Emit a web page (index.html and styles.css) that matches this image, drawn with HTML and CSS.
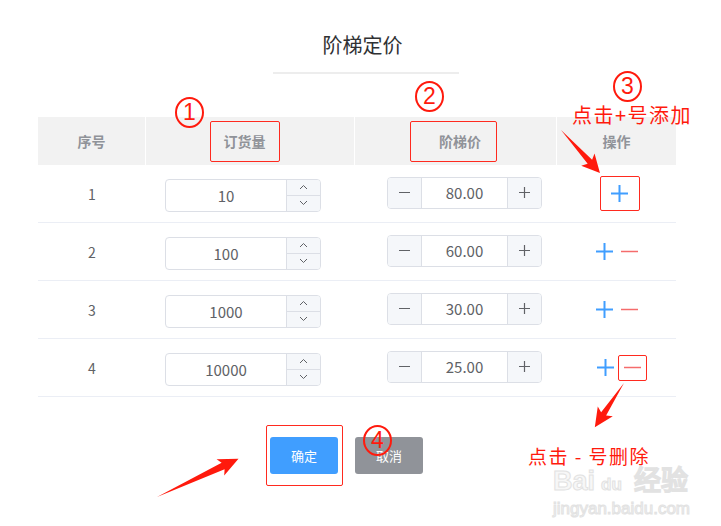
FILE: index.html
```html
<!DOCTYPE html>
<html lang="zh-CN">
<head>
    <meta charset="UTF-8">
    <title>阶梯定价</title>
    <link rel="stylesheet" href="styles.css">
</head>
<body>
<div class="page">
    <h1 class="title">阶梯定价</h1>
    <div class="title-line"></div>

    <div class="panel">
        <div class="tier-table">
            <div class="th">序号</div>
            <div class="th"><span class="mark mark-qty">订货量</span></div>
            <div class="th"><span class="mark mark-price">阶梯价</span></div>
            <div class="th th-last">操作</div>

            <div class="td">1</div>
            <div class="td td-qty">
                <div class="num-input">
                    <span class="num-value">10</span>
                    <span class="spin">
                        <span class="spin-btn"><svg width="9" height="6" viewBox="0 0 9 6"><path d="M1 5 L4.5 1.5 L8 5" fill="none" stroke="#606266" stroke-width="1"/></svg></span>
                        <span class="spin-btn"><svg width="9" height="6" viewBox="0 0 9 6"><path d="M1 1 L4.5 4.5 L8 1" fill="none" stroke="#606266" stroke-width="1"/></svg></span>
                    </span>
                </div>
            </div>
            <div class="td td-price">
                <div class="stepper">
                    <span class="step-btn"><svg width="11" height="11" viewBox="0 0 11 11"><path d="M0 5.5 H11" stroke="#606266" stroke-width="1.2"/></svg></span>
                    <span class="step-value">80.00</span>
                    <span class="step-btn step-plus"><svg width="11" height="11" viewBox="0 0 11 11"><path d="M0 5.5 H11 M5.5 0 V11" stroke="#606266" stroke-width="1.2"/></svg></span>
                </div>
            </div>
            <div class="td td-op">
                <span class="op-box op-add-box"><svg class="ico-plus" width="17" height="17" viewBox="0 0 17 17"><path d="M0 8.5 H17 M8.5 0 V17" stroke="#409eff" stroke-width="2"/></svg></span>
            </div>

            <div class="td">2</div>
            <div class="td td-qty">
                <div class="num-input">
                    <span class="num-value">100</span>
                    <span class="spin">
                        <span class="spin-btn"><svg width="9" height="6" viewBox="0 0 9 6"><path d="M1 5 L4.5 1.5 L8 5" fill="none" stroke="#606266" stroke-width="1"/></svg></span>
                        <span class="spin-btn"><svg width="9" height="6" viewBox="0 0 9 6"><path d="M1 1 L4.5 4.5 L8 1" fill="none" stroke="#606266" stroke-width="1"/></svg></span>
                    </span>
                </div>
            </div>
            <div class="td td-price">
                <div class="stepper">
                    <span class="step-btn"><svg width="11" height="11" viewBox="0 0 11 11"><path d="M0 5.5 H11" stroke="#606266" stroke-width="1.2"/></svg></span>
                    <span class="step-value">60.00</span>
                    <span class="step-btn step-plus"><svg width="11" height="11" viewBox="0 0 11 11"><path d="M0 5.5 H11 M5.5 0 V11" stroke="#606266" stroke-width="1.2"/></svg></span>
                </div>
            </div>
            <div class="td td-op">
                <svg class="ico-plus" width="17" height="17" viewBox="0 0 17 17"><path d="M0 8.5 H17 M8.5 0 V17" stroke="#409eff" stroke-width="2"/></svg>
                <svg class="ico-minus" width="17" height="17" viewBox="0 0 17 17"><path d="M0 8.5 H17" stroke="#f56c6c" stroke-width="1.5"/></svg>
            </div>

            <div class="td">3</div>
            <div class="td td-qty">
                <div class="num-input">
                    <span class="num-value">1000</span>
                    <span class="spin">
                        <span class="spin-btn"><svg width="9" height="6" viewBox="0 0 9 6"><path d="M1 5 L4.5 1.5 L8 5" fill="none" stroke="#606266" stroke-width="1"/></svg></span>
                        <span class="spin-btn"><svg width="9" height="6" viewBox="0 0 9 6"><path d="M1 1 L4.5 4.5 L8 1" fill="none" stroke="#606266" stroke-width="1"/></svg></span>
                    </span>
                </div>
            </div>
            <div class="td td-price">
                <div class="stepper">
                    <span class="step-btn"><svg width="11" height="11" viewBox="0 0 11 11"><path d="M0 5.5 H11" stroke="#606266" stroke-width="1.2"/></svg></span>
                    <span class="step-value">30.00</span>
                    <span class="step-btn step-plus"><svg width="11" height="11" viewBox="0 0 11 11"><path d="M0 5.5 H11 M5.5 0 V11" stroke="#606266" stroke-width="1.2"/></svg></span>
                </div>
            </div>
            <div class="td td-op">
                <svg class="ico-plus" width="17" height="17" viewBox="0 0 17 17"><path d="M0 8.5 H17 M8.5 0 V17" stroke="#409eff" stroke-width="2"/></svg>
                <svg class="ico-minus" width="17" height="17" viewBox="0 0 17 17"><path d="M0 8.5 H17" stroke="#f56c6c" stroke-width="1.5"/></svg>
            </div>

            <div class="td">4</div>
            <div class="td td-qty">
                <div class="num-input">
                    <span class="num-value">10000</span>
                    <span class="spin">
                        <span class="spin-btn"><svg width="9" height="6" viewBox="0 0 9 6"><path d="M1 5 L4.5 1.5 L8 5" fill="none" stroke="#606266" stroke-width="1"/></svg></span>
                        <span class="spin-btn"><svg width="9" height="6" viewBox="0 0 9 6"><path d="M1 1 L4.5 4.5 L8 1" fill="none" stroke="#606266" stroke-width="1"/></svg></span>
                    </span>
                </div>
            </div>
            <div class="td td-price">
                <div class="stepper">
                    <span class="step-btn"><svg width="11" height="11" viewBox="0 0 11 11"><path d="M0 5.5 H11" stroke="#606266" stroke-width="1.2"/></svg></span>
                    <span class="step-value">25.00</span>
                    <span class="step-btn step-plus"><svg width="11" height="11" viewBox="0 0 11 11"><path d="M0 5.5 H11 M5.5 0 V11" stroke="#606266" stroke-width="1.2"/></svg></span>
                </div>
            </div>
            <div class="td td-op">
                <svg class="ico-plus" width="17" height="17" viewBox="0 0 17 17"><path d="M0 8.5 H17 M8.5 0 V17" stroke="#409eff" stroke-width="2"/></svg>
                <span class="op-box op-del-box"><svg class="ico-minus" width="17" height="17" viewBox="0 0 17 17"><path d="M0 8.5 H17" stroke="#f56c6c" stroke-width="1.5"/></svg></span>
            </div>
        </div>

        <div class="actions">
            <span class="mark mark-ok"><button class="btn btn-primary">确定</button></span>
            <button class="btn btn-cancel">取消</button>
        </div>
    </div>

    <!-- annotations drawn over the page -->
    <span class="circle-num num-1">1</span>
    <span class="circle-num num-2">2</span>
    <span class="circle-num num-3">3</span>
    <span class="circle-num num-4">4</span>
    <span class="note note-add">点击+号添加</span>
    <span class="note note-del">点击 - 号删除</span>

    <svg class="arrows" width="721" height="526" viewBox="0 0 721 526">
        <g transform="translate(561 130) rotate(47.8)">
            <polygon points="0,0 43,-3 40,-9 58,0 40,9 43,3" fill="#ff1a0d"/>
        </g>
        <g transform="translate(624 383) rotate(123.4)">
            <polygon points="0,0 37,-3 34,-9 53,0 34,9 37,3" fill="#ff1a0d"/>
        </g>
        <g transform="translate(157 497) rotate(-25.1)">
            <polygon points="0,0 73,-3.5 70,-9 90,0 70,9 73,3.5" fill="#ff1a0d"/>
        </g>
    </svg>

    <div class="watermark">
        <div class="wm-logo">Bai<span class="wm-paw">du</span>经验</div>
        <div class="wm-url">jingyan.baidu.com</div>
    </div>
</div>
</body>
</html>
```

FILE: styles.css
```css
body {
    margin: 0;
    background-color: #fff;
    font-family: "Noto Sans CJK SC", "Noto Sans", sans-serif;
}
.page {
    position: relative;
    width: 721px;
    height: 526px;
    padding-top: 31px;
    box-sizing: border-box;
    overflow: hidden;
}
.title {
    margin: 0;
    font-size: 20px;
    line-height: 28px;
    font-weight: normal;
    color: #303133;
    text-align: center;
    padding-left: 4px;
}
.title-line {
    width: 186px;
    height: 2px;
    margin: 13px 0 0 273px;
    background-color: #ededed;
}
.panel {
    width: 638px;
    margin: 43px 0 0 38px;
}
.tier-table {
    display: grid;
    grid-template-columns: 108px 209px 202px 119px;
}
.th {
    height: 48px;
    display: flex;
    align-items: center;
    justify-content: center;
    background-color: #f2f2f2;
    border-right: 1px solid #fff;
    color: #909399;
    font-size: 14px;
    font-weight: bold;
}
.th-last {
    border-right: none;
}
.mark {
    border: 1px solid #ff2a1f;
    border-radius: 2px;
}
.mark-qty {
    padding: 9px 13px 10px 13px;
    margin-left: -11px;
}
.mark-price {
    padding: 9px 15px 10px 28px;
    margin-left: -4px;
}
.td {
    height: 57px;
    display: flex;
    align-items: center;
    justify-content: center;
    border-bottom: 1px solid #ebeef5;
    color: #606266;
    font-size: 14px;
}
.td-qty {
    justify-content: flex-start;
    padding-left: 19px;
}
.td-price {
    justify-content: flex-start;
    padding-left: 32px;
}
.td-op {
    gap: 8px;
}
.num-input {
    display: flex;
    width: 156px;
    height: 33px;
    box-sizing: border-box;
    border: 1px solid #dcdfe6;
    border-radius: 4px;
    margin-top: 3px;
    overflow: hidden;
}
.num-value {
    flex: 1;
    display: flex;
    align-items: center;
    justify-content: center;
    font-size: 15px;
    color: #606266;
}
.spin {
    width: 33px;
    display: flex;
    flex-direction: column;
    border-left: 1px solid #dcdfe6;
    background-color: #f5f7fa;
}
.spin-btn {
    flex: 1;
    display: flex;
    align-items: center;
    justify-content: center;
}
.spin-btn + .spin-btn {
    border-top: 1px solid #dcdfe6;
}
.stepper {
    display: flex;
    width: 155px;
    height: 32px;
    box-sizing: border-box;
    border: 1px solid #dcdfe6;
    border-radius: 4px;
    overflow: hidden;
    margin-top: -2px;
}
.step-btn {
    width: 33px;
    display: flex;
    align-items: center;
    justify-content: center;
    background-color: #f5f7fa;
    border-right: 1px solid #dcdfe6;
}
.step-plus {
    border-right: none;
    border-left: 1px solid #dcdfe6;
}
.step-value {
    flex: 1;
    display: flex;
    align-items: center;
    justify-content: center;
    font-size: 15px;
    color: #606266;
}
.op-box {
    display: flex;
    align-items: center;
    justify-content: center;
    border: 1px solid #ff2a1f;
    border-radius: 2px;
}
.op-add-box {
    width: 38px;
    height: 33px;
    margin-left: 6px;
}
.op-del-box {
    width: 27px;
    height: 24px;
    margin-left: -4px;
    margin-right: -10px;
}
.actions {
    display: flex;
    align-items: center;
    gap: 12px;
    margin-top: 28px;
    padding-left: 228px;
}
.mark-ok {
    display: flex;
    padding: 11px 4px 11px 3px;
}
.btn {
    width: 68px;
    height: 37px;
    border: none;
    border-radius: 3px;
    color: #fff;
    font-size: 13px;
    font-family: "Noto Sans CJK SC", sans-serif;
}
.btn-primary {
    background-color: #409eff;
}
.btn-cancel {
    background-color: #909399;
}
.circle-num {
    position: absolute;
    width: 25px;
    height: 27px;
    border: 2px solid #ff1a0d;
    border-radius: 50%;
    color: #ff1a0d;
    font-family: "Liberation Sans", sans-serif;
    font-size: 23px;
    line-height: 27px;
    text-align: center;
}
.num-1 { left: 175px; top: 97px; }
.num-2 { left: 415px; top: 81px; }
.num-3 { left: 613px; top: 71px; }
.num-4 { left: 363px; top: 425px; }
.note {
    position: absolute;
    color: #ff1a0d;
    white-space: nowrap;
}
.note-add {
    left: 572px;
    top: 100px;
    font-size: 20px;
    letter-spacing: 1.5px;
}
.note-del {
    left: 528px;
    top: 442px;
    font-size: 19px;
    letter-spacing: 1.5px;
}
.arrows {
    position: absolute;
    left: 0;
    top: 0;
}
.watermark {
    position: absolute;
    left: 553px;
    top: 466px;
    color: #f7f7f7;
    -webkit-text-stroke: 1px #e2e2e2;
    font-family: "Liberation Sans", sans-serif;
}
.wm-logo {
    font-size: 27px;
    font-weight: bold;
    line-height: 30px;
}
.wm-paw {
    font-size: 17px;
    margin: 0 12px 0 6px;
}
.wm-url {
    font-size: 17px;
    line-height: 18px;
}
```
